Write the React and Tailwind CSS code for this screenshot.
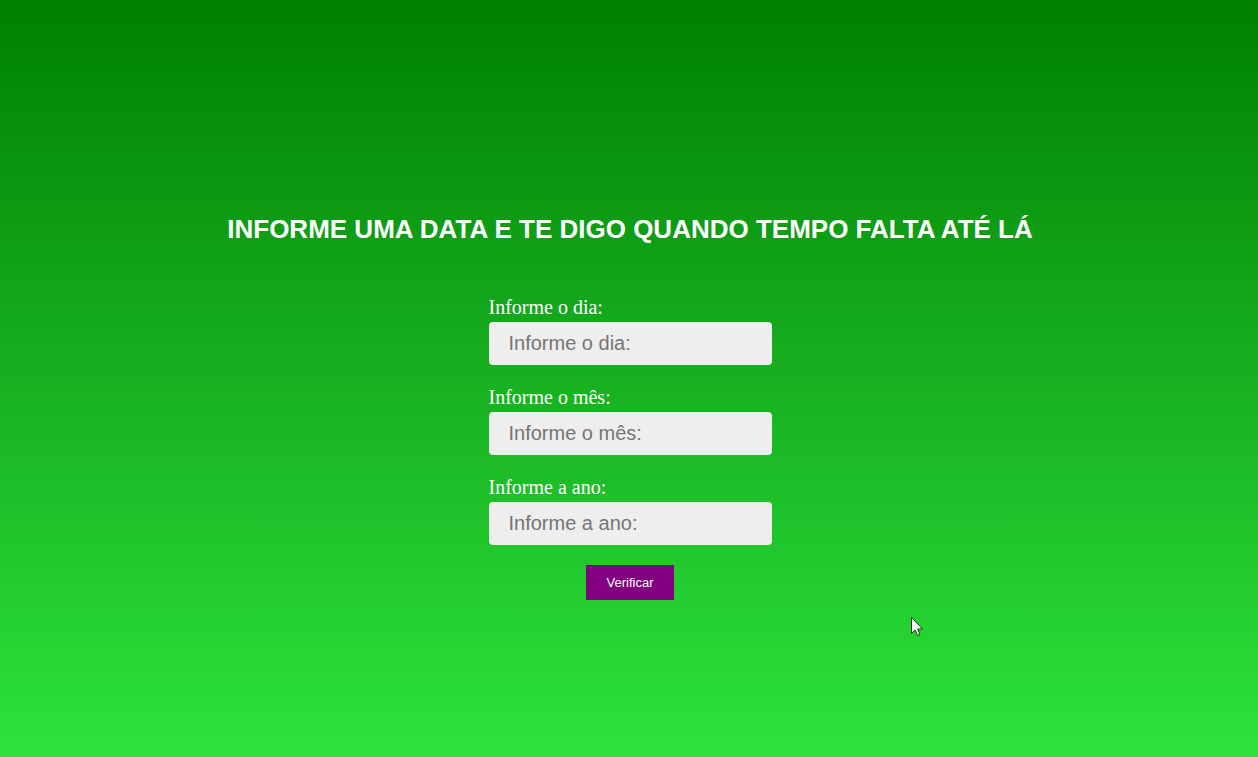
const fields = [
  { id: "dia", label: "Informe o dia:" },
  { id: "mes", label: "Informe o mês:" },
  { id: "ano", label: "Informe a ano:" },
];

function Field({ id, label }) {
  return (
    <div className="flex w-full flex-col">
      <label htmlFor={id} className="pb-[2px] font-['Liberation_Serif',serif] text-[20px] leading-[25px] text-white">
        {label}
      </label>
      <input
        id={id}
        type="text"
        placeholder={label}
        className="h-[43px] w-full rounded-[4px] bg-[#eee] px-5 text-[20px] text-black placeholder:text-[#757575]"
      />
    </div>
  );
}

function Pointer() {
  return (
    <svg
      aria-hidden="true"
      className="pointer-events-none absolute top-[617px] left-[911px]"
      width="12"
      height="19"
      viewBox="0 0 12 19"
    >
      <path
        d="M.5 .5V16.5L4.2 13L6.6 18.5L9 17.5L6.6 12H11.5Z"
        fill="#fff"
        stroke="#0c3a10"
        strokeWidth="1"
      />
    </svg>
  );
}

export default function App() {
  return (
    <main className="relative flex min-h-screen flex-col items-center bg-linear-to-b from-[#008000] to-[#2de33b] pt-[214px] pr-4 pb-10 pl-[18px] font-['Liberation_Sans',sans-serif]">
      <h1 className="text-center text-[26px] leading-[30px] font-bold text-white uppercase">
        Informe uma data e te digo quando tempo falta até lá
      </h1>
      <form
        className="mt-[51px] flex w-full max-w-[283px] flex-col items-center gap-5"
        onSubmit={(e) => e.preventDefault()}
      >
        {fields.map((f) => (
          <Field key={f.id} {...f} />
        ))}
        <button type="submit" className="h-[35px] w-[88px] bg-[#800080] text-[13px] text-white">
          Verificar
        </button>
      </form>
      <Pointer />
    </main>
  );
}
